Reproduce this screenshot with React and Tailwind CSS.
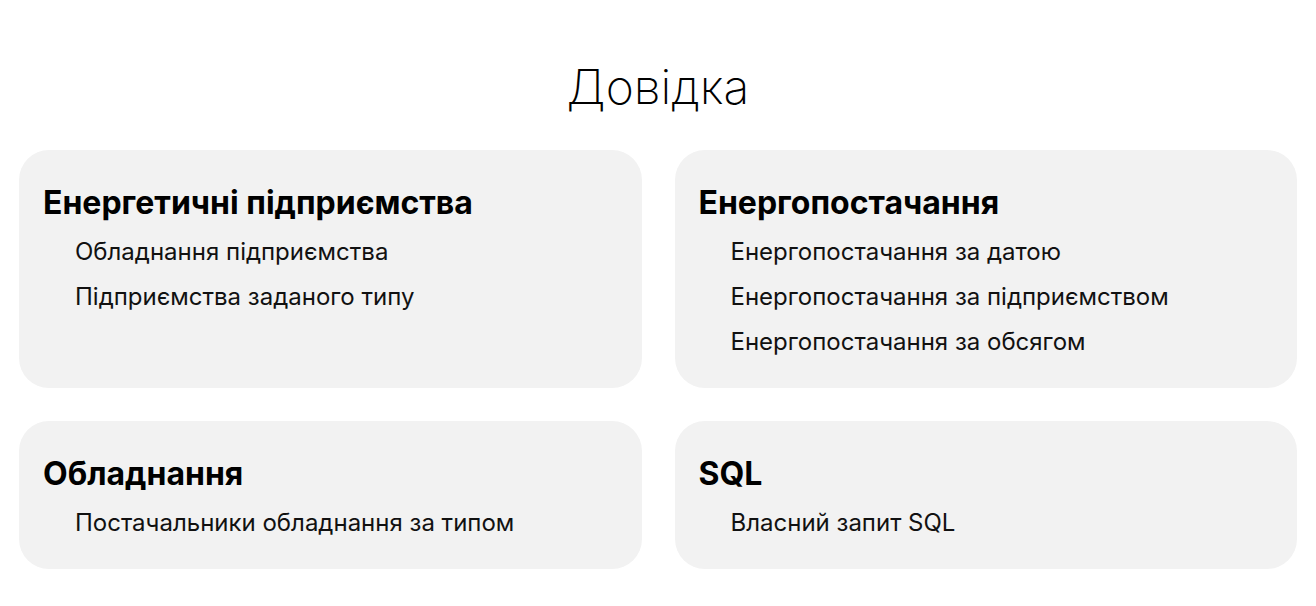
const sections = [
  {
    title: "Енергетичні підприємства",
    items: ["Обладнання підприємства", "Підприємства заданого типу"],
  },
  {
    title: "Енергопостачання",
    items: [
      "Енергопостачання за датою",
      "Енергопостачання за підприємством",
      "Енергопостачання за обсягом",
    ],
  },
  {
    title: "Обладнання",
    items: ["Постачальники обладнання за типом"],
  },
  {
    title: "SQL",
    items: ["Власний запит SQL"],
  },
];

function Card({ title, items }) {
  return (
    <div className="rounded-[30px] bg-[#f2f2f2] px-6 pt-[33px] pb-6">
      <h2 className="text-[32px] leading-[40px] font-bold text-black">{title}</h2>
      <ul className="mt-[6px] pl-8">
        {items.map((item) => (
          <li key={item} className="text-[24px] leading-[45px] text-[#111]">
            {item}
          </li>
        ))}
      </ul>
    </div>
  );
}

export default function App() {
  return (
    <div className="min-h-screen bg-white px-[19px] pt-[63px] font-['Inter',sans-serif]">
      <h1 className="text-center text-[48px] leading-[48px] font-extralight text-black">Довідка</h1>
      <div className="mt-[39px] grid grid-cols-2 gap-x-[33px] gap-y-[33px]">
        {sections.map((s) => (
          <Card key={s.title} {...s} />
        ))}
      </div>
    </div>
  );
}
